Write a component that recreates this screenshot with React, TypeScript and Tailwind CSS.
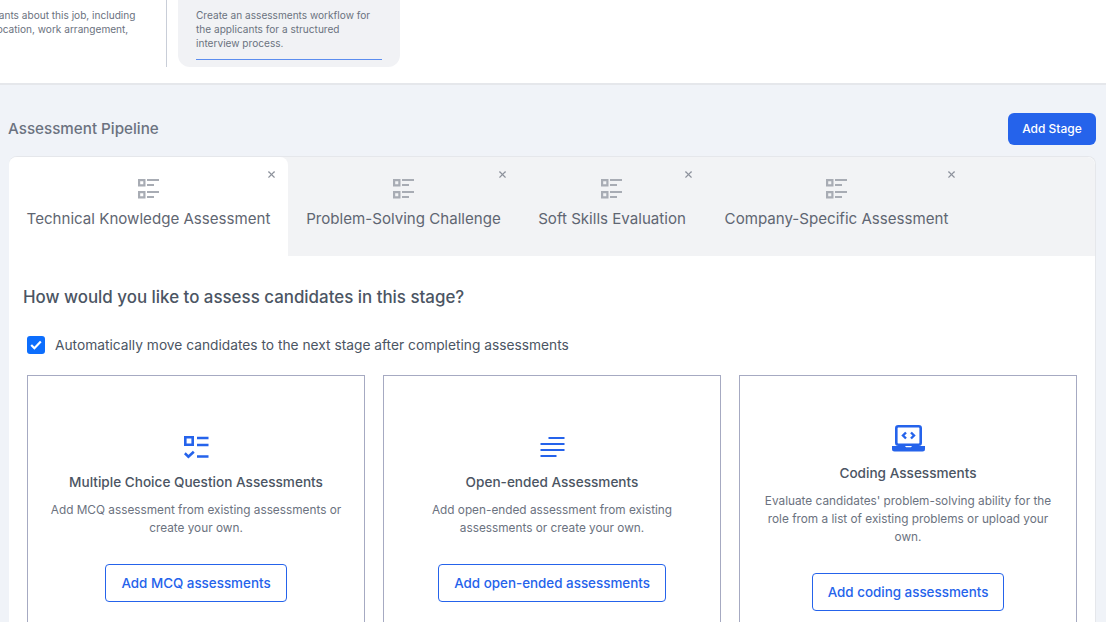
import { X } from "lucide-react";

const tabs = [
  { label: "Technical Knowledge Assessment", width: "w-[279px]", active: true },
  { label: "Problem-Solving Challenge", width: "w-[231px]", active: false },
  { label: "Soft Skills Evaluation", width: "w-[186px]", active: false },
  { label: "Company-Specific Assessment", width: "w-[263px]", active: false },
];

function StageIcon() {
  return (
    <svg width="22" height="20" viewBox="0 0 22 20" fill="none" className="text-[#a8acb4]">
      <path d="M0 0h7.500v7.500H0zM2.200 2.200v3.100h3.100V2.200z" fill="currentColor" fillRule="evenodd" />
      <path d="M0 12h7.500v7.500H0zM2.200 14.200v3.100h3.100v-3.100z" fill="currentColor" fillRule="evenodd" />
      <path d="M9 1h12M9 6h7M9 13h12M9 18h7" stroke="currentColor" strokeWidth="1.900" />
    </svg>
  );
}

function McqIcon() {
  return (
    <svg width="25" height="23" viewBox="0 0 25 23" fill="none" className="text-[#2563eb]">
      <path d="M1.300 1.300h7.400v7.400H1.300z" stroke="currentColor" strokeWidth="2.600" />
      <path d="M13 2h11.500M13 9h11.500M13 20.500h11.500" stroke="currentColor" strokeWidth="2.600" />
      <path d="M0.800 17.300l3.600 3.400 5.400-5" stroke="currentColor" strokeWidth="2.600" />
    </svg>
  );
}

function LinesIcon() {
  return (
    <svg width="25" height="22" viewBox="0 0 25 22" fill="none" className="text-[#2563eb]">
      <path d="M8.500 2h16M0.500 8h24M0.500 14h24M0.500 20h16" stroke="currentColor" strokeWidth="2.200" />
    </svg>
  );
}

function LaptopIcon() {
  return (
    <svg width="33" height="27" viewBox="0 0 33 27" fill="none" className="text-[#2563eb]">
      <rect x="4.300" y="1.300" width="24.400" height="18.400" rx="2" stroke="currentColor" strokeWidth="2.600" />
      <path d="M0 21h13l1 1.200h5l1-1.200h13v3a2.500 2.500 0 0 1-2.500 2.500h-28A2.500 2.500 0 0 1 0 24z" fill="currentColor" />
      <path d="M14 7.500l-3 3 3 3M19 7.500l3 3-3 3" stroke="currentColor" strokeWidth="2.400" />
    </svg>
  );
}

function AssessCard({ icon, title, text, action }: { icon: React.ReactNode; title: string; text: string; action: string }) {
  return (
    <div className="h-[288px] border border-[#a6aac2] flex flex-col items-center justify-center text-center px-[14px]">
      <div className="h-[24px] flex items-center justify-center mb-[13px]">{icon}</div>
      <h3 className="text-[13.600px] leading-[20px] font-medium text-[#4b5563]">{title}</h3>
      <p className="mt-[9px] text-[11.800px] leading-[18px] text-[#6b7280]">{text}</p>
      <button className="mt-[27px] h-[38px] px-[15px] rounded border border-[#2563eb] text-[13.400px] font-medium text-[#2563eb]">
        {action}
      </button>
    </div>
  );
}

export default function App() {
  return (
    <div className="h-[622px] w-[1106px] overflow-hidden bg-[#f0f3f8] font-['Inter',sans-serif]">
      <div className="h-[85px] bg-white border-b-2 border-[#e5e7eb] flex items-start">
        <div className="w-[167px] h-[67px] overflow-hidden pt-[8px] border-r border-[#c9ced8] shrink-0">
          <p className="ml-[-30px] w-[175px] text-[10.100px] leading-[14px] text-[#6b7280]">
            applicants about this job, including their location, work arrangement,
          </p>
        </div>
        <div className="ml-[11px] w-[222px] h-[67px] bg-[#f1f2f5] rounded-b-xl px-[18px] pt-[8px]">
          <div className="h-[52px] border-b border-[#5b8def]">
            <p className="text-[10.100px] leading-[14px] text-[#6b7280]">
              Create an assessments workflow for the applicants for a structured interview process.
            </p>
          </div>
        </div>
      </div>

      <div className="pl-[8px] pr-[10px]">
        <div className="mt-[28px] flex items-center justify-between">
          <h2 className="text-[15.200px] font-medium text-[#6b7280]">Assessment Pipeline</h2>
          <button className="h-[32px] w-[88px] rounded-md bg-[#2563eb] text-[12px] font-medium text-white">Add Stage</button>
        </div>

        <div className="mt-[11px] ml-[1px] rounded-t-lg border-t border-r border-[#e5e7eb] bg-white">
          <div className="h-[99px] flex bg-[#f2f3f5] rounded-t-lg">
            {tabs.map((t) => (
              <div
                key={t.label}
                className={`relative ${t.width} pt-[22px] flex flex-col items-center ${t.active ? "bg-white rounded-t-lg" : ""}`}
              >
                <StageIcon />
                <span className="mt-[9px] text-[15.100px] leading-[22px] whitespace-nowrap text-[#5f6672]">{t.label}</span>
                <X size={11} strokeWidth={2.500} className="absolute top-[12px] right-[11px] text-[#8d929c]" />
              </div>
            ))}
          </div>

          <div className="px-[14px] pt-[30px]">
            <h2 className="text-[16.900px] leading-[22px] font-medium text-[#4b5563]">How would you like to assess candidates in this stage?</h2>
            <label className="mt-[27px] ml-[4px] flex items-center gap-[10px]">
              <span className="w-[18px] h-[18px] rounded-[3px] bg-[#0d6efd] flex items-center justify-center">
                <svg width="12" height="10" viewBox="0 0 12 10" fill="none">
                  <path d="M1.200 5l3.200 3.200L10.800 1.500" stroke="white" strokeWidth="2.200" />
                </svg>
              </span>
              <span className="text-[13.750px] text-[#4b5563]">Automatically move candidates to the next stage after completing assessments</span>
            </label>

            <div className="mt-[19px] ml-[4px] mr-[4px] grid grid-cols-3 gap-[18px]">
              <AssessCard
                icon={<McqIcon />}
                title="Multiple Choice Question Assessments"
                text="Add MCQ assessment from existing assessments or create your own."
                action="Add MCQ assessments"
              />
              <AssessCard
                icon={<LinesIcon />}
                title="Open-ended Assessments"
                text="Add open-ended assessment from existing assessments or create your own."
                action="Add open-ended assessments"
              />
              <AssessCard
                icon={<LaptopIcon />}
                title="Coding Assessments"
                text="Evaluate candidates' problem-solving ability for the role from a list of existing problems or upload your own."
                action="Add coding assessments"
              />
            </div>
          </div>
        </div>
      </div>
    </div>
  );
}
